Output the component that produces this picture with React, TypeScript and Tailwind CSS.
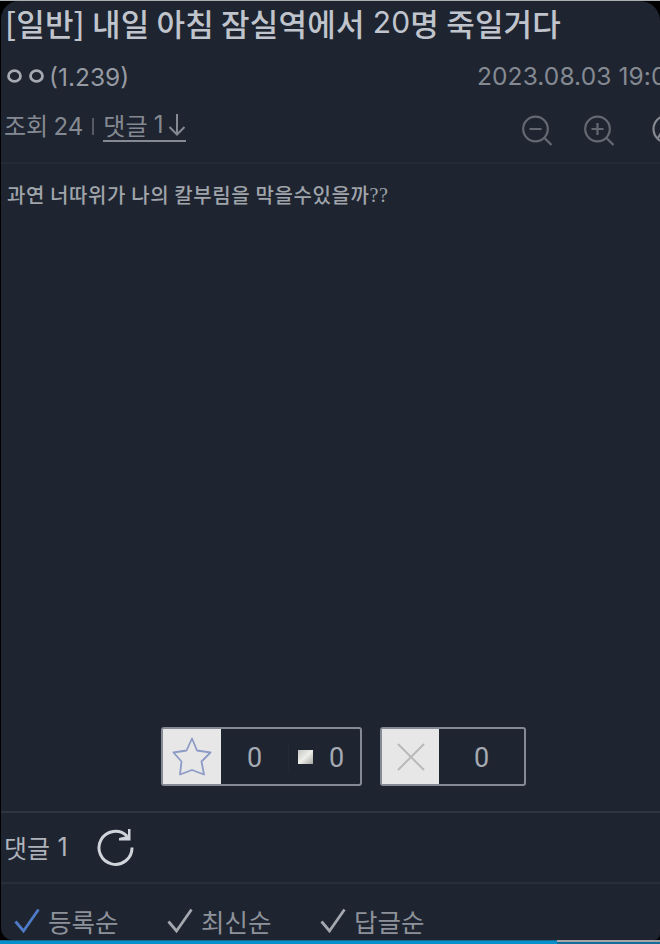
import type { ReactNode } from "react"

function Zoom({ plus, className = "" }: { plus?: boolean; className?: string }) {
  return (
    <svg className={`h-8 w-8 ${className}`} viewBox="0 0 32 32" fill="none" stroke="#646971" strokeWidth="2.2">
      <circle cx="13.5" cy="14" r="12.3" />
      <path d="M7.5 14h12M22 22.5l7.5 7.5" />
      {plus && <path d="M13.5 8v12" />}
    </svg>
  )
}

function Check({ color }: { color: string }) {
  return (
    <svg className="h-[26px] w-[26px]" viewBox="0 0 26 26" fill="none" stroke={color} strokeWidth="2.8">
      <path d="M1.5 13.5 9.5 23 24.5 1.5" />
    </svg>
  )
}

function SortOption({ color, children }: { color: string; children: ReactNode }) {
  return (
    <div className="flex w-[153px] items-center gap-2">
      <Check color={color} />
      <span className="text-[25.5px] leading-none text-[#8d929a]">{children}</span>
    </div>
  )
}

export default function App() {
  return (
    <div className="flex h-[944px] w-[660px] flex-col overflow-hidden bg-black font-['Noto_Sans_CJK_KR',sans-serif] whitespace-nowrap">
      <div className="h-px shrink-0 bg-[#a9afb2]" />
      <div className="ml-px flex h-[939px] shrink-0 flex-col overflow-hidden rounded-tl-[18px] rounded-tr-[20px] rounded-bl-[12px] rounded-br-[6px] bg-[#1e2430]">
        {/* Post header */}
        <header className="flex h-[163px] shrink-0 flex-col border-b-2 border-[#252b36]">
          <h1 className="flex h-[42px] items-center pl-[4px] text-[31px] leading-none font-medium tracking-[0.18px] text-[#c0c4cc]">
            <span className="whitespace-pre">[일반] 내일 아침 잠실역에서 </span>
            <span className="pl-px font-[Inter] text-[30px] font-normal">20</span>
            <span>명 죽일거다</span>
          </h1>
          <div className="flex h-[66px] items-center pl-[5px] text-[#969ba3]">
            <svg className="h-4 w-[38px]" viewBox="0 0 38 16" fill="none" stroke="#a5a9b0" strokeWidth="2.8">
              <ellipse cx="8.5" cy="8" rx="6" ry="5.4" />
              <ellipse cx="30.5" cy="8" rx="6" ry="5.4" />
            </svg>
            <span className="pt-[2px] pl-[5px] font-[Inter] text-[24.5px]">(1.239)</span>
            <span className="ml-auto w-[183px] pt-px font-[Inter] text-[24.5px] tracking-[0.1px] text-[#858a92]">
              2023.08.03 19:0
            </span>
          </div>
          <div className="flex h-[34px] items-center pl-[3px] text-[24px] text-[#858a92]">
            <span>
              조회 <span className="font-[Inter]">24</span>
            </span>
            <span className="mr-[9px] ml-[9px] h-[17px] w-[2px] bg-[#555a63]" />
            <span className="flex h-[32px] items-center border-b-2 border-[#858a92]">
              댓글&nbsp;<span className="pl-px font-[Inter]">1</span>
              <svg className="ml-[4px] h-6 w-[18px]" viewBox="0 0 18 24" fill="none" stroke="currentColor" strokeWidth="2">
                <path d="M9 1v20M1.5 14 9 21.5 16.5 14" />
              </svg>
            </span>
            <div className="ml-auto flex w-[138px] shrink-0 pt-[10px]">
              <Zoom className="shrink-0" />
              <Zoom plus className="ml-[30px] shrink-0" />
              <svg className="ml-[36px] h-8 w-8 shrink-0" viewBox="0 0 32 32" fill="none" stroke="#858a92" strokeWidth="2.2">
                <circle cx="15" cy="14" r="13.5" />
                <path d="M6 23l3-5 5 5" />
              </svg>
            </div>
          </div>
        </header>

        {/* Post body */}
        <main className="flex h-[649px] shrink-0 flex-col justify-between border-b-2 border-[#303641] pb-[25px]">
          <p className="flex h-[61px] items-center pl-[6px] text-[20px] font-medium tracking-[0.6px] text-[#a0a4ab]">
            과연 너따위가 나의 칼부림을 막을수있을까<span className="font-['Liberation_Serif',serif]">??</span>
          </p>
          <div className="flex gap-[18px] pl-[160px] font-[Roboto] text-[27px] text-[#a5aab2]">
            <div className="flex h-[59px] w-[201px] items-center rounded-[3px] border-2 border-[#858a94]">
              <div className="flex h-full w-[58px] items-center justify-center bg-[#e7e7e8]">
                <svg className="h-[40px] w-[40px]" viewBox="0 0 40 40" fill="none" stroke="#8d9bc6" strokeWidth="1.8" strokeLinejoin="round">
                  <path d="M20 1.5 25 13.5 38.5 15.5 29.5 24.5 32 37.5 20 33 8 37.5 9.5 24.5 1.5 15.5 14.5 13.5Z" />
                </svg>
              </div>
              <span className="w-[67px] pt-[3px] text-center">0</span>
              <span className="h-7 w-px bg-[#232a36]" />
              <span className="ml-[9px] h-[14px] w-[15px] bg-gradient-to-br from-[#c4c4c2] via-[#eeeeea] to-[#a6a6a4]" />
              <span className="ml-[16px] pt-[3px]">0</span>
            </div>
            <div className="flex h-[59px] w-[146px] items-center rounded-[3px] border-2 border-[#858a94]">
              <div className="flex h-full w-[57px] items-center justify-center bg-[#e7e7e8]">
                <svg className="h-7 w-7" viewBox="0 0 28 28" fill="none" stroke="#b9b9b9" strokeWidth="2">
                  <path d="M1 1 27 27M27 1 1 27" />
                </svg>
              </div>
              <span className="flex-1 pt-[3px] text-center">0</span>
            </div>
          </div>
        </main>

        {/* Comments */}
        <section className="flex h-[71px] shrink-0 items-center border-b-2 border-[#292f3a] pl-[3px] text-[25px] text-[#afb3bb]">
          댓글&nbsp;<span className="pl-[2px] font-[Inter]">1</span>
          <svg className="ml-[28px] h-10 w-10" viewBox="0 0 40 40" fill="none" stroke="#cfd3da" strokeWidth="3">
            <path d="M36 19.5A16.5 16.5 0 1 1 31 8" />
            <path d="M34.5 1v11.5H23v-2.5l6-1.5 3-1.5V1Z" fill="#cfd3da" stroke="none" />
          </svg>
        </section>
        <div className="flex shrink-0 pt-[24px] pl-[13px]">
          <SortOption color="#4e7bc7">등록순</SortOption>
          <SortOption color="#a4a8ae">최신순</SortOption>
          <SortOption color="#a4a8ae">답글순</SortOption>
        </div>
      </div>
      <div className="flex h-1 shrink-0">
        <div className="w-[557px] border-t border-[#17688c] bg-[#0590cc]" />
        <div className="flex-1 border-t-2 border-[#a6a5a5] bg-[#176b98]" />
      </div>
    </div>
  )
}
